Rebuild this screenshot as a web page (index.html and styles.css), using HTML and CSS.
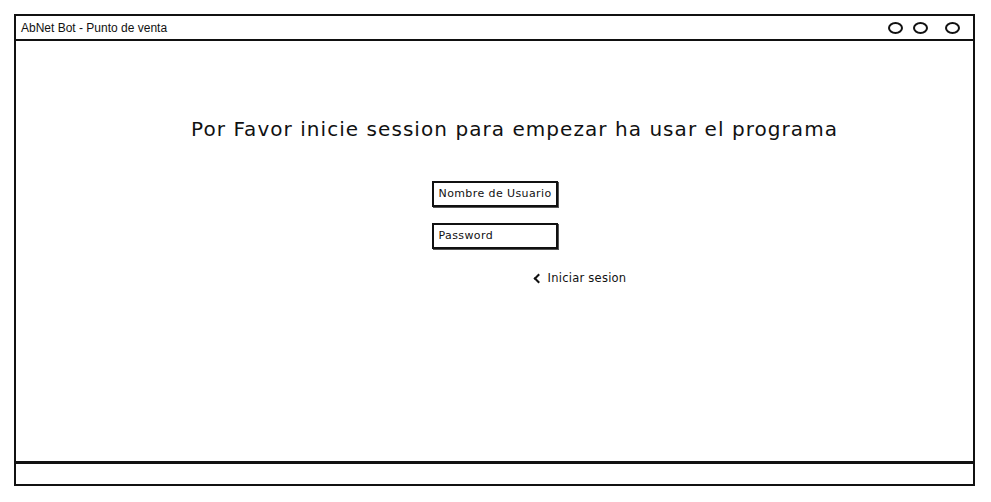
FILE: index.html
```html
<!DOCTYPE html>
<html lang="es">
<head>
<meta charset="utf-8">
<title>AbNet Bot - Punto de venta</title>
<link rel="stylesheet" href="styles.css">
</head>
<body>
<div class="window">
  <div class="titlebar">
    <span class="title">AbNet Bot - Punto de venta</span>
    <div class="controls">
      <span class="dot dot-1"></span>
      <span class="dot dot-2"></span>
      <span class="dot dot-3"></span>
    </div>
  </div>
  <div class="content">
    <h1 class="heading">Por Favor inicie session para empezar ha usar el programa</h1>
    <div class="form">
      <div class="field">Nombre de Usuario</div>
      <div class="field">Password</div>
      <a class="link" href="#">
        <span class="chev"></span>
        <span class="link-text">Iniciar sesion</span>
      </a>
    </div>
  </div>
  <div class="statusbar"></div>
</div>
</body>
</html>
```

FILE: styles.css
```css
* { box-sizing: border-box; }
html, body { margin: 0; padding: 0; background: #fff; }
body {
  font-family: "DejaVu Sans", "Liberation Sans", sans-serif;
  color: #111;
}
.window {
  margin: 14px 0 0 14px;
  width: 961px;
  height: 472px;
  border: 2px solid #111;
  display: flex;
  flex-direction: column;
}
.titlebar {
  height: 25px;
  border-bottom: 2px solid #111;
  display: flex;
  align-items: center;
  justify-content: space-between;
  padding: 0 13px 0 5px;
}
.title {
  font-family: "Liberation Sans", sans-serif;
  font-size: 12px;
}
.controls {
  display: flex;
  align-items: center;
}
.dot {
  width: 15px;
  height: 12px;
  border: 2px solid #111;
  border-radius: 50%;
}
.dot-2 { margin-left: 10px; }
.dot-3 { margin-left: 17px; }
.content {
  flex: 1;
  display: flex;
  flex-direction: column;
  align-items: center;
}
.heading {
  margin: 76px 0 0 40px;
  font-size: 20px;
  font-weight: normal;
  line-height: 24px;
  letter-spacing: 1.05px;
}
.form {
  margin-top: 40px;
  width: 126px;
  display: flex;
  flex-direction: column;
  gap: 16px;
}
.field {
  height: 26px;
  border: 2px solid #111;
  padding: 0 5px;
  font-size: 11px;
  letter-spacing: 0.4px;
  line-height: 22px;
  white-space: nowrap;
  box-shadow: 1px 1px 0 #555;
}
.link {
  margin: 6px 0 0 102px;
  display: flex;
  align-items: center;
  color: #111;
  text-decoration: none;
  white-space: nowrap;
}
.chev {
  flex: none;
  display: block;
  width: 7px;
  height: 7px;
  border-left: 2px solid #111;
  border-bottom: 2px solid #111;
  transform: rotate(45deg);
  margin: 0 6px 0 1px;
}
.link-text {
  font-size: 11.5px;
  letter-spacing: 0.25px;
  color: #111;
}
.statusbar {
  height: 23px;
  border-top: 3px solid #111;
}
```
